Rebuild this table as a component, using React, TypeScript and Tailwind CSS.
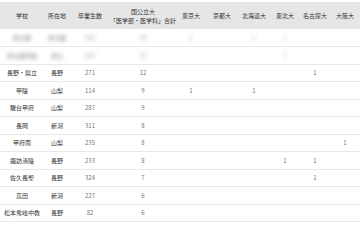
const font = { fontFamily: '"Noto Sans CJK JP", "Noto Sans", sans-serif' }

type Row = {
  school: string
  pref: string
  grads: string
  total: string
  unis: string[]
  hidden?: boolean
}

const rows: Row[] = [
  { school: '非公開', pref: '非公開', grads: '000', total: '00', unis: ['1', '', '1', '1', '', ''], hidden: true },
  { school: '非公開高校', pref: '非公', grads: '000', total: '10', unis: ['', '', '', '1', '', ''], hidden: true },
  { school: '長野・県立', pref: '長野', grads: '271', total: '12', unis: ['', '', '', '', '1', ''] },
  { school: '甲陵', pref: '山梨', grads: '114', total: '9', unis: ['1', '', '1', '', '', ''] },
  { school: '駿台甲府', pref: '山梨', grads: '287', total: '9', unis: ['', '', '', '', '', ''] },
  { school: '長岡', pref: '新潟', grads: '311', total: '8', unis: ['', '', '', '', '', ''] },
  { school: '甲府南', pref: '山梨', grads: '235', total: '8', unis: ['', '', '', '', '', '1'] },
  { school: '諏訪清陵', pref: '長野', grads: '233', total: '8', unis: ['', '', '', '1', '1', ''] },
  { school: '佐久長聖', pref: '長野', grads: '324', total: '7', unis: ['', '', '', '', '1', ''] },
  { school: '高田', pref: '新潟', grads: '227', total: '6', unis: ['', '', '', '', '', ''] },
  { school: '松本秀峰中教', pref: '長野', grads: '82', total: '6', unis: ['', '', '', '', '', ''] },
]

const uniNames = ['東京大', '京都大', '北海道大', '東北大', '名古屋大', '大阪大']
const widths = ['w-[44px]', 'w-[26px]', 'w-[40px]', 'w-[66px]', 'w-[30px]', 'w-[32px]', 'w-[32px]', 'w-[30px]', 'w-[30px]', 'w-[30px]']

export default function App() {
  return (
    <div className="w-[360px] h-[240px] bg-white overflow-hidden pt-[2px]" style={font}>
      <table className="w-[360px] table-fixed border-collapse text-[6px] leading-[9px]">
        <colgroup>
          {widths.map((w, i) => (
            <col key={i} className={w} />
          ))}
        </colgroup>
        <thead>
          <tr className="bg-[#e6e6e6] h-[27px] text-[#333]">
            <th className="font-normal text-center">学校</th>
            <th className="font-normal text-center">所在地</th>
            <th className="font-normal text-center">卒業生数</th>
            <th className="font-normal text-center whitespace-nowrap">
              国公立大
              <br />
              「医学部・医学科」合計
            </th>
            {uniNames.map((u) => (
              <th key={u} className="font-normal text-center whitespace-nowrap">
                {u}
              </th>
            ))}
          </tr>
        </thead>
        <tbody>
          {rows.map((r, i) => {
            const blur = r.hidden ? 'inline-block blur-[2px] opacity-70' : ''
            return (
              <tr key={i} className="h-[17.5px] border-b border-[#e8e8e8]">
                <td className="text-center text-[#333] whitespace-nowrap">
                  <span className={blur}>{r.school}</span>
                </td>
                <td className="text-center text-[#333]">
                  <span className={blur}>{r.pref}</span>
                </td>
                <td className="text-center text-[#777]">
                  <span className={blur}>{r.grads}</span>
                </td>
                <td className="text-center text-[#777]">
                  <span className={blur}>{r.total}</span>
                </td>
                {r.unis.map((v, j) => (
                  <td key={j} className="text-center text-[#777]">
                    <span className={blur}>{v}</span>
                  </td>
                ))}
              </tr>
            )
          })}
        </tbody>
      </table>
    </div>
  )
}
